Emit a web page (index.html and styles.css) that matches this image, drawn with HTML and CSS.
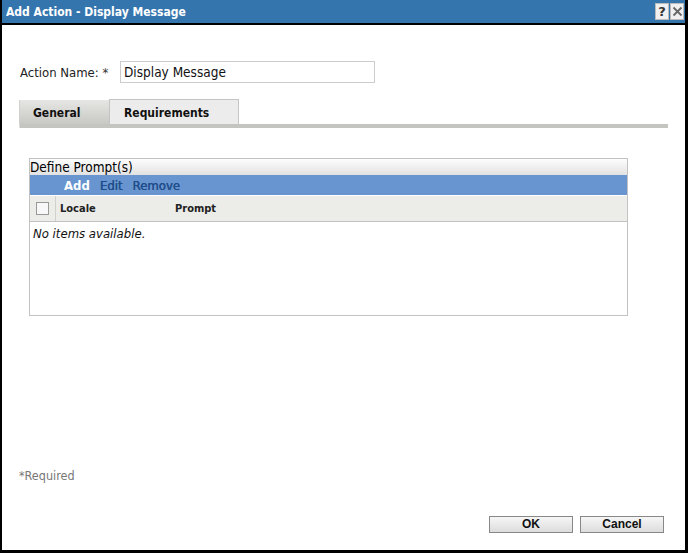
FILE: index.html
```html
<!DOCTYPE html>
<html>
<head>
<meta charset="utf-8">
<link rel="stylesheet" href="styles.css">
</head>
<body>
<div class="dialog">
  <div class="titlebar">
    <span class="title">Add Action - Display Message</span>
    <div class="tbtns">
      <span class="tbtn help">?</span>
      <span class="tbtn close"><svg width="11" height="11" viewBox="0 0 11 11"><path d="M1.5 1.5 L9.5 9.5 M9.5 1.5 L1.5 9.5" stroke="#666" stroke-width="1.8" fill="none"/></svg></span>
    </div>
  </div>
  <div class="content">
    <div class="namerow">
      <label class="lbl">Action Name: <span class="req">*</span></label>
      <div class="input">Display Message</div>
    </div>
    <div class="tabs">
      <div class="tab active">General</div>
      <div class="tab">Requirements</div>
    </div>
    <div class="tabline"></div>
    <div class="grid">
      <div class="ghead">Define Prompt(s)</div>
      <div class="gtool"><span class="t-add">Add</span><span class="t-link">Edit</span><span class="t-link">Remove</span></div>
      <div class="gcols">
        <div class="cbcell"><span class="cb"></span></div>
        <div class="col locale">Locale</div>
        <div class="col">Prompt</div>
      </div>
      <div class="gbody">No items available.</div>
    </div>
    <div class="spacer"></div>
    <div class="required">*Required</div>
    <div class="buttons">
      <button class="btn">OK</button>
      <button class="btn">Cancel</button>
    </div>
  </div>
</div>
</body>
</html>
```
FILE: styles.css
```css
html, body { margin: 0; padding: 0; background: #fff; }
body { width: 688px; height: 553px; overflow: hidden; }
.dialog {
  box-sizing: border-box;
  width: 688px; height: 553px;
  border-left: 2px solid #000;
  border-right: 3px solid #000;
  border-bottom: 3px solid #000;
  display: flex; flex-direction: column;
  font-family: "DejaVu Sans Condensed", "DejaVu Sans", sans-serif;
}
.titlebar {
  height: 23px;
  background: #3575ad;
  border-bottom: 2px solid #000;
  display: flex; align-items: center; justify-content: space-between;
}
.title {
  color: #fff; font-weight: bold; font-size: 12px; padding-left: 4px;
}
.tbtns { display: flex; gap: 1px; margin-right: 1px; }
.tbtn {
  width: 12px; height: 15px; background: #f0f0f0; border: 1px solid #bbb;
  display: flex; align-items: center; justify-content: center;
  font-family: "DejaVu Sans", sans-serif; font-weight: bold; font-size: 13px; color: #333;
}
.content { flex: 1; display: flex; flex-direction: column; padding: 0 17px 0 17px; }
.namerow { display: flex; align-items: center; margin-top: 36px; }
.lbl { font-size: 13px; color: #222; width: 100px; padding-left: 1px; }
.req { color: #333; }
.input {
  width: 250px; height: 20px; border: 1px solid #ccc; font-size: 13.5px; color: #111;
  padding-left: 3px; line-height: 20px;
}
.tabs { display: flex; margin-top: 16px; }
.tab {
  height: 24px; line-height: 27px; font-weight: bold; font-size: 12px; color: #111;
  box-sizing: border-box;
}
.tab.active {
  width: 90px; padding-left: 13px; margin-top: 1px;
  background: linear-gradient(#e6e6e4, #c8c8c4);
  border-left: 1px solid #d0d0ce;
}
.tab:not(.active) {
  width: 130px; padding-left: 14px; height: 25px;
  background: #ececec; border: 1px solid #c4c4c4; border-bottom: none;
}
.tabline { height: 4px; background: #c4c4c0; border-left: 1px solid #ddd; }
.grid {
  margin-top: 30px; margin-left: 10px; width: 599px; border: 1px solid #c2c2c2;
  box-sizing: border-box; height: 158px;
}
.ghead {
  height: 16px; line-height: 17px; background: linear-gradient(#fdfdfd, #e2e2e2);
  font-size: 13.5px; color: #000; padding-left: 0;
}
.gtool {
  height: 20px; background: #6895cf; display: flex; align-items: center; padding-left: 34px;
  font-size: 13px; gap: 10px;
}
.t-add { color: #fff; font-weight: bold; }
.t-link { color: #1f4c8a; text-shadow: 0.4px 0 0 #1f4c8a; }
.gcols {
  height: 25px; background: #ecece9; border-top: 1px solid #fff; border-bottom: 1px solid #c2c2c2;
  display: flex; align-items: center; font-size: 11px; font-weight: bold; color: #222;
}
.cbcell { width: 26px; height: 25px; display: flex; align-items: center; justify-content: center; border-right: 1px solid #d0d0cc; box-sizing: border-box; }
.cb { width: 11px; height: 11px; border: 1px solid #999; background: #f8f8f8; }
.col.locale { width: 115px; padding-left: 4px; }
.gbody { font-style: italic; font-size: 13px; padding: 4px 3px; color: #111; }
.spacer { flex: 1; }
.required { font-size: 12.5px; color: #777; padding-left: 0; margin-bottom: 33px; }
.buttons { display: flex; justify-content: flex-end; gap: 7px; margin-bottom: 17px; margin-right: 4px; }
.btn {
  width: 84px; height: 17px; border: 1px solid #888; background: linear-gradient(#f6f6f6, #dcdcdc);
  font-family: "Liberation Sans", Arial, sans-serif; font-weight: bold; font-size: 12px; color: #111;
  padding: 0; line-height: 15px;
}
```
